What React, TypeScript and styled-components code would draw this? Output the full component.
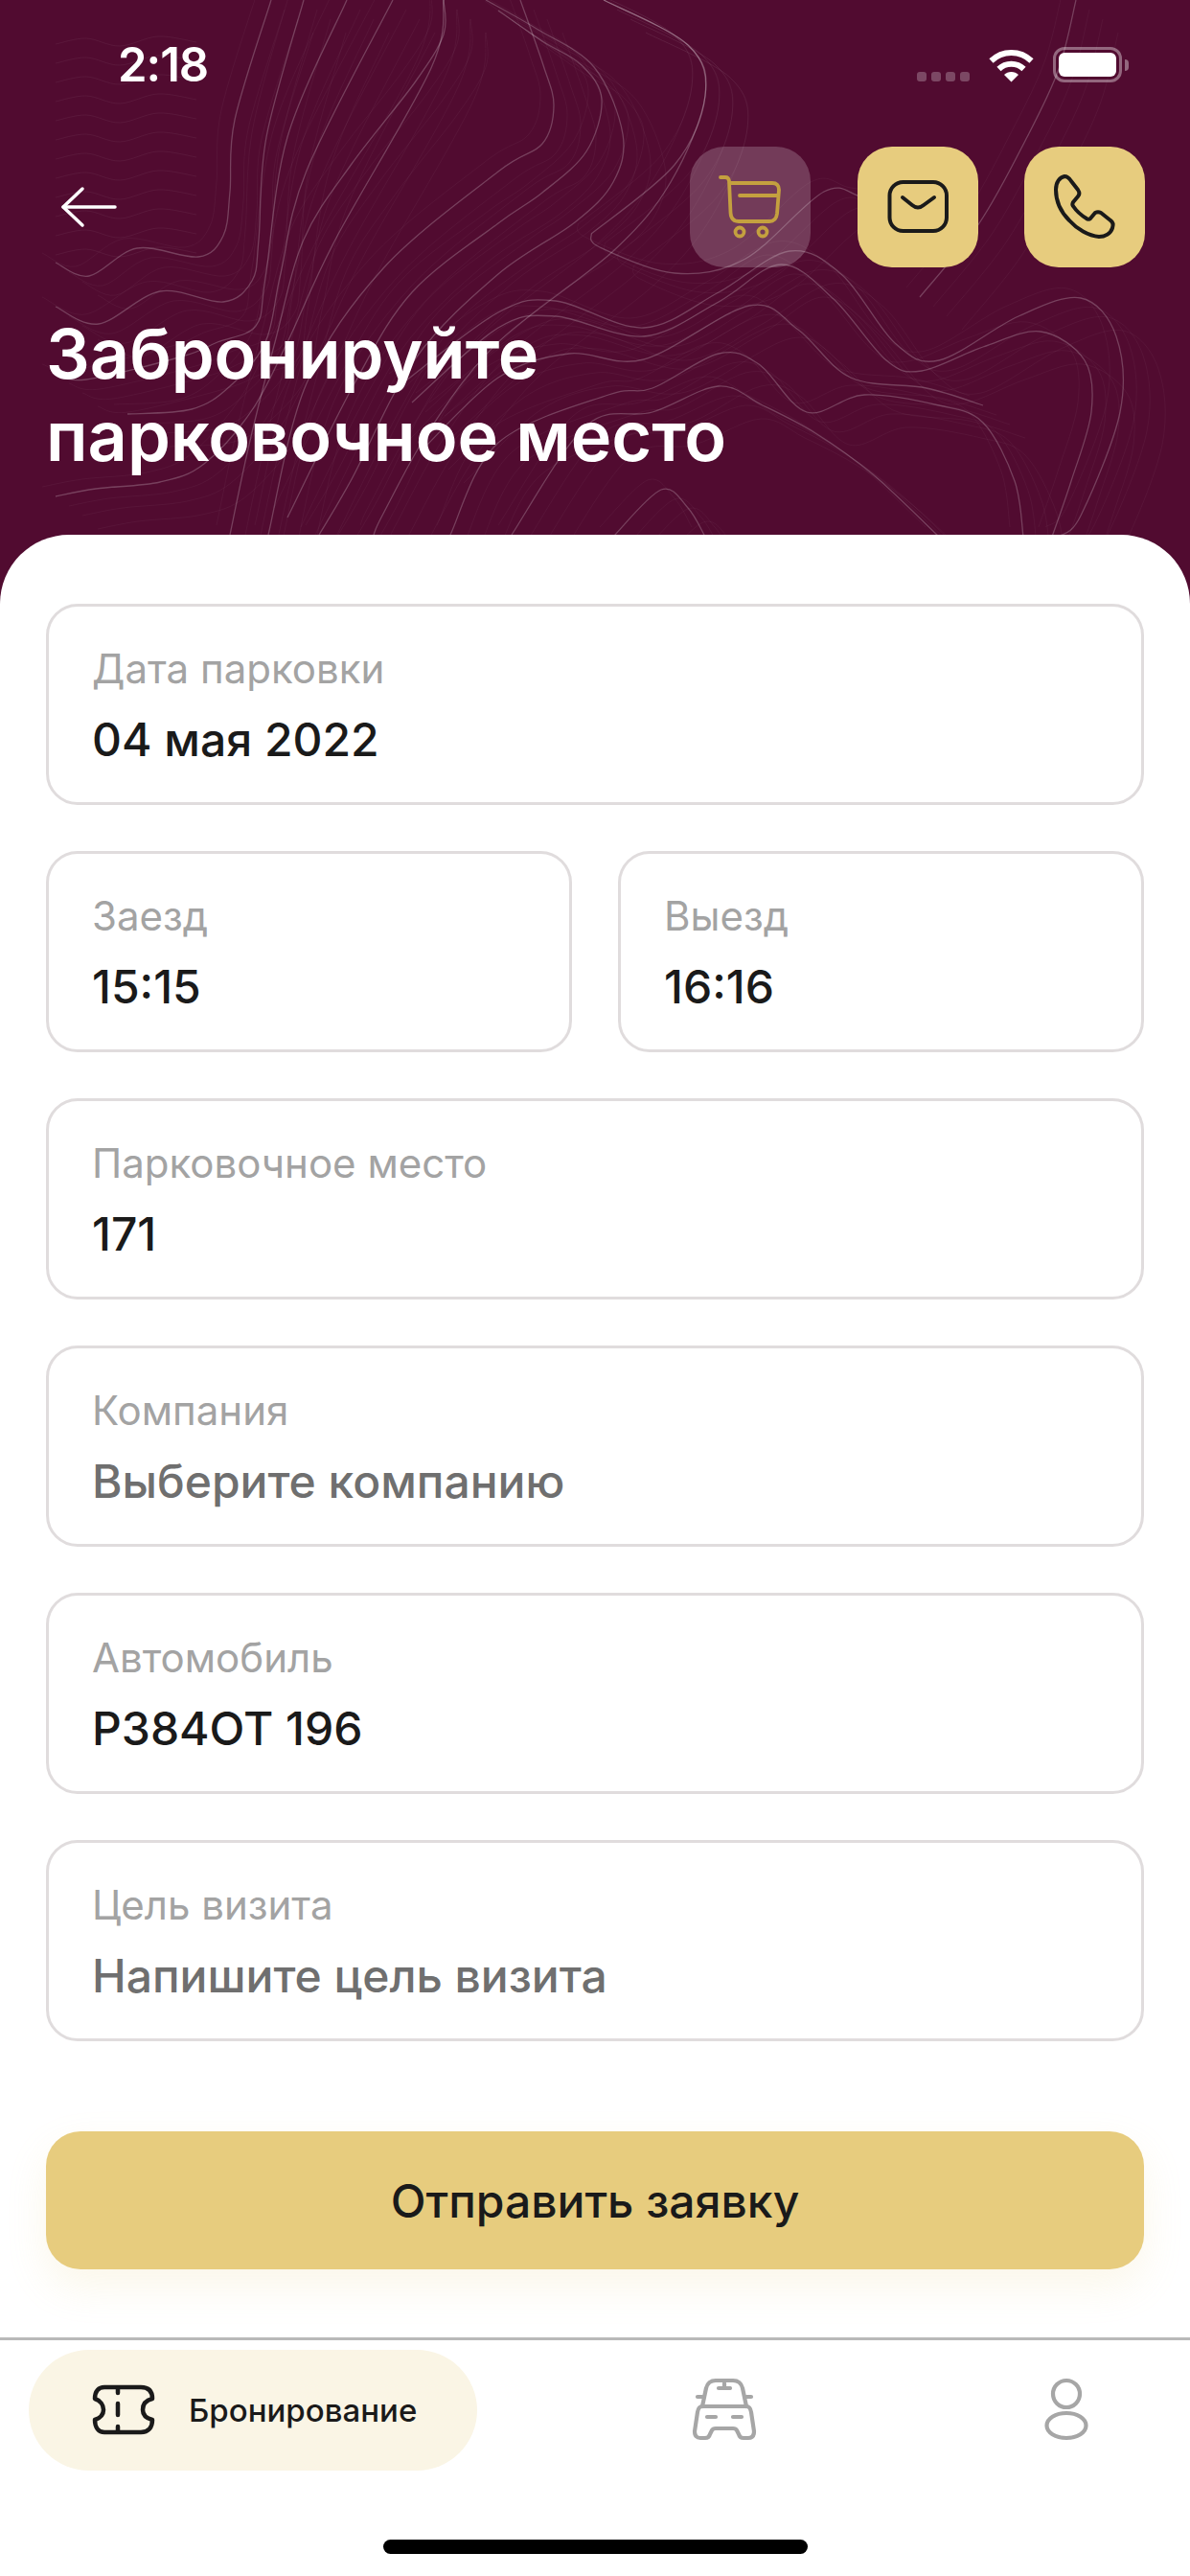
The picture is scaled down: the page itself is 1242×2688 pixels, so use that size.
import React from 'react';
import styled, { createGlobalStyle } from 'styled-components';

const GlobalStyle = createGlobalStyle`
    html, body {
        margin: 0;
        padding: 0;
        background: #ffffff;
    }
    * {
        box-sizing: border-box;
    }
`

const Page = styled.div`
    position: relative;
    isolation: isolate;
    display: flex;
    flex-direction: column;
    width: 1242px;
    height: 2688px;
    overflow: hidden;
    background-color: #510B30;
    font-family: Inter, "Noto Sans", sans-serif;
`

// Topographic lines behind the header
const Topo = styled.svg`
    position: absolute;
    top: 0;
    left: 0;
    z-index: -1;
`

const StatusBar = styled.div`
    display: flex;
    justify-content: space-between;
    align-items: flex-end;
    height: 86px;
    padding: 0 71px 0 123px;
    color: #ffffff;
`

const Time = styled.div`
    font-size: 49px;
    font-weight: 600;
    line-height: 37px;
    letter-spacing: -1px;
`

const StatusIcons = styled.div`
    display: flex;
    align-items: flex-end;
`

const Signal = styled.div`
    display: flex;
    gap: 5px;
    margin-right: 20px;
    padding-bottom: 1px;
`

const SignalDot = styled.span`
    width: 10px;
    height: 10px;
    border-radius: 3px;
    background-color: rgba(255, 255, 255, 0.25);
`

const Battery = styled.div`
    position: relative;
    width: 72px;
    height: 37px;
    margin-left: 20px;
    padding: 3px;
    border: 3px solid rgba(255, 255, 255, 0.38);
    border-radius: 12px;

    &::after {
        content: '';
        position: absolute;
        top: 10px;
        right: -10px;
        width: 4px;
        height: 12px;
        border-radius: 0 4px 4px 0;
        background-color: rgba(255, 255, 255, 0.38);
    }
`

const BatteryFill = styled.div`
    height: 100%;
    border-radius: 6px;
    background-color: #ffffff;
`

const Toolbar = styled.div`
    display: flex;
    align-items: center;
    justify-content: space-between;
    margin-top: 67px;
    padding: 0 47px 0 63px;
`

const Actions = styled.div`
    display: flex;
    gap: 48.5px;
`

const Tile = styled.button<{ $ghost?: boolean }>`
    display: flex;
    align-items: center;
    justify-content: center;
    width: 126px;
    height: 126px;
    padding: 0;
    border: none;
    border-radius: 36px;
    background-color: ${(p) => (p.$ghost ? 'rgba(255, 255, 255, 0.2)' : '#E7CC7E')};
`

const BackButton = styled.button`
    display: flex;
    padding: 0;
    border: none;
    background: transparent;
`

const Title = styled.h1`
    margin: 47px 0 0;
    padding-left: 48px;
    color: #ffffff;
    font-size: 72px;
    font-weight: 600;
    line-height: 86px;
`

const Panel = styled.div`
    flex: 1;
    display: flex;
    flex-direction: column;
    margin-top: 60px;
    border-radius: 72px 72px 0 0;
    background-color: #ffffff;
`

const Form = styled.div`
    display: flex;
    flex-direction: column;
    gap: 48px;
    padding: 72px 48px 0;
`

const Row = styled.div`
    display: grid;
    grid-template-columns: 1fr 1fr;
    gap: 48px;
`

const FieldBox = styled.div`
    height: 210px;
    padding: 40px 45px 0;
    border: 3px solid #E0DCDD;
    border-radius: 33px;
`

const FieldLabel = styled.div`
    color: #A3A3A3;
    font-size: 42px;
    line-height: 50px;
`

const FieldValue = styled.div<{ $muted?: boolean }>`
    margin-top: 20px;
    color: ${(p) => (p.$muted ? '#6F6F6F' : '#1A1A1A')};
    font-size: 48px;
    font-weight: 450;
    line-height: 58px;
`

const Submit = styled.button`
    display: block;
    width: 1146px;
    height: 144px;
    margin: 94px 48px 0;
    padding: 0;
    border: none;
    border-radius: 36px;
    background-color: #E7CC7E;
    box-shadow: 0 18px 42px rgba(231, 204, 126, 0.16);
    color: #1A1A1A;
    font-family: inherit;
    font-size: 48px;
    font-weight: 500;
`

const TabBar = styled.div`
    display: grid;
    grid-template-columns: 468px 516px 198px;
    align-items: center;
    justify-items: center;
    margin-top: 71px;
    padding: 10px 0 0 30px;
    border-top: 3px solid #B9B9B9;
`

const ActiveTab = styled.div`
    display: flex;
    align-items: center;
    gap: 32px;
    width: 468px;
    height: 126px;
    padding-left: 63px;
    border-radius: 63px;
    background-color: #FAF5E5;
    color: #1A1A1A;
    font-size: 33px;
    font-weight: 500;
`

const HomeIndicator = styled.div`
    width: 443px;
    height: 15px;
    margin: 72px auto 0;
    border-radius: 8px;
    background-color: #000000;
`

type Pt = [number, number];

// catmull-rom through the points, good enough for map contours
const smooth = (pts: Pt[]) => {
    let d = `M${pts[0][0]} ${pts[0][1]}`;
    for (let i = 0; i < pts.length - 1; i++) {
        const p0 = pts[Math.max(i - 1, 0)];
        const p1 = pts[i];
        const p2 = pts[i + 1];
        const p3 = pts[Math.min(i + 2, pts.length - 1)];
        const c1x = p1[0] + (p2[0] - p0[0]) / 6;
        const c1y = p1[1] + (p2[1] - p0[1]) / 6;
        const c2x = p2[0] - (p3[0] - p1[0]) / 6;
        const c2y = p2[1] - (p3[1] - p1[1]) / 6;
        d += ` C${c1x} ${c1y} ${c2x} ${c2y} ${p2[0]} ${p2[1]}`;
    }
    return d;
};

const contours: Pt[][] = [
    [[58, 274], [93, 288], [143, 259], [207, 268], [233, 246], [240, 200], [245, 125], [283, 0]],
    [[58, 320], [103, 338], [167, 304], [233, 315], [263, 293], [270, 250], [278, 143], [317, 0]],
    [[58, 390], [90, 396], [190, 372], [227, 357], [267, 340], [277, 290], [300, 143], [362, 0]],
    [[133, 432], [200, 427], [240, 403], [277, 357], [293, 285], [320, 178], [410, 0]],
    [[58, 518], [100, 510], [167, 503], [213, 484], [263, 428], [300, 357], [350, 250], [450, 71], [463, 0]],
    [[240, 558], [260, 464], [287, 357], [317, 250], [367, 171], [433, 86], [463, 36], [463, 0]],
    [[333, 558], [367, 500], [433, 375], [520, 286], [600, 232], [640, 190], [650, 140], [620, 70], [560, 30], [507, 0]],
    [[390, 558], [400, 536], [450, 446], [520, 357], [640, 262], [700, 190], [736, 100], [718, 47], [630, 0]],
    [[280, 558], [320, 400], [400, 280], [520, 179], [566, 150], [578, 110], [567, 68], [543, 0]],
    [[300, 540], [370, 400], [430, 305], [520, 233], [566, 201], [612, 158], [628, 104], [607, 68], [566, 43], [520, 11]],
    [[617, 244], [626, 258], [704, 285], [778, 270], [860, 200], [902, 206], [960, 215]],
    [[617, 244], [704, 172], [736, 100], [718, 47], [630, 0]],
    [[420, 400], [520, 326], [580, 314], [672, 342], [750, 305], [824, 262], [879, 287], [934, 358], [980, 376], [1063, 330], [1128, 311], [1165, 351], [1169, 430], [1128, 538], [1105, 560]],
    [[430, 420], [520, 342], [580, 330], [672, 351], [750, 315], [815, 276], [870, 312], [925, 376], [962, 387], [1026, 362], [1086, 346], [1132, 376], [1139, 430], [1118, 502], [1098, 560]],
    [[440, 470], [520, 394], [594, 369], [672, 375], [782, 319], [833, 344], [888, 394], [967, 405], [1026, 423]],
    [[470, 558], [520, 462], [635, 412], [681, 405], [750, 369], [792, 380], [842, 430], [902, 412], [980, 423], [1026, 441], [1059, 502], [1068, 560]],
    [[534, 558], [612, 444], [681, 430], [750, 403], [796, 423], [851, 452], [911, 495], [980, 560]],
    [[640, 560], [690, 511], [718, 530], [736, 560]],
    [[1123, 0], [1105, 72], [1072, 143], [1022, 233], [960, 310]],
];

// faint lines: shifted copies of the strong ones
const faintShifts: Pt[] = [[14, 10], [28, 20], [-14, -10], [44, 34]];

const leftWaves = Array.from({ length: 12 }, (_, i) => {
    const y = 40 + i * 20;
    const pts: Pt[] = [[58, y + 6], [90, y], [125, y + 8], [165, y - 2], [205, y + 4]];
    return pts;
});

const TopoLines = () => (
    <Topo width="1242" height="560" viewBox="0 0 1242 560" fill="none">
        {contours.map((pts, i) =>
            faintShifts.map(([dx, dy], j) => (
                <path key={`${i}-${j}`} d={smooth(pts)} transform={`translate(${dx} ${dy})`}
                    stroke="#ffffff" strokeOpacity="0.04" strokeWidth="1" />
            ))
        )}
        {leftWaves.map((pts, i) => (
            <path key={i} d={smooth(pts)} stroke="#ffffff" strokeOpacity="0.05" strokeWidth="1" />
        ))}
        {contours.map((pts, i) => (
            <path key={i} d={smooth(pts)} stroke="#ffffff" strokeOpacity="0.22" strokeWidth="1.3" />
        ))}
    </Topo>
);

const WifiIcon = () => (
    <svg width="47" height="36" viewBox="0 0 47 36" fill="none">
        <path d="M2.5 13.5A30 30 0 0 1 44.5 13.5" stroke="#fff" strokeWidth="6" />
        <path d="M10.5 22A18.500 18.500 0 0 1 36.500 22" stroke="#fff" strokeWidth="6" />
        <path d="M23.500 35.500L16 28A10.600 10.600 0 0 1 31 28Z" fill="#fff" />
    </svg>
);

const BackIcon = () => (
    <svg width="60" height="44" viewBox="0 0 60 44" fill="none" stroke="#fff" strokeWidth="3.500" strokeLinecap="round" strokeLinejoin="round">
        <path d="M3 22H57" />
        <path d="M23 3L3 22L23 41" />
    </svg>
);

const CartIcon = () => (
    <svg width="72" height="72" viewBox="0 0 72 72" fill="none" stroke="#C4A03F" strokeWidth="3.800" strokeLinecap="round" strokeLinejoin="round">
        <path d="M5 5H10Q13.500 5 14 9L15.500 42Q16 51 24 51H56Q63 51 64 43L66 18Q66 11 59 11H15" />
        <path d="M25 24H65" />
        <circle cx="25" cy="62" r="4.500" />
        <circle cx="49" cy="62" r="4.500" />
    </svg>
);

const MailIcon = () => (
    <svg width="72" height="72" viewBox="0 0 72 72" fill="none" stroke="#1A1A1A" strokeWidth="4" strokeLinecap="round" strokeLinejoin="round">
        <rect x="6.500" y="10" width="59.500" height="51" rx="14" />
        <path d="M20 26L30 34Q36 39 42 34L53 26" />
    </svg>
);

const PhoneIcon = () => (
    <svg width="72" height="72" viewBox="0 0 72 72" fill="none" stroke="#1A1A1A" strokeWidth="4" strokeLinejoin="round">
        <path d="M6 18C6 10 10 5 15 4C18 4 20 6 22 9L29 18C31 21 31 23 29 25L24 31C23 33 23 34 24 35C28 41 33 45 38 48C39 49 41 49 42 48L47 42C49 41 51 41 53 42L63 50C66 52 66 55 65 58C63 64 57 67 51 67C40 66 28 59 20 50C11 41 6 30 6 18Z" />
    </svg>
);

const TicketIcon = () => (
    <svg width="72" height="60" viewBox="0 0 72 60" fill="none" stroke="#1A1A1A" strokeWidth="4.500" strokeLinecap="round" strokeLinejoin="round">
        <path d="M16 6H54C62 6 66 10 66 18C58 20 56 25 56 29.500C56 34 58 38 66 40C66 48 62 53 54 53H16C10 53 6 48 6 40C12 38 15 34 15 29.500C15 25 12 20 6 18C6 10 10 6 16 6Z" />
        <path d="M30 7V12M30 23V35M30 47V52" />
    </svg>
);

const CarIcon = () => (
    <svg width="72" height="72" viewBox="0 0 72 72" fill="none" stroke="#A6A6A6" strokeWidth="4.200" strokeLinecap="round" strokeLinejoin="round">
        <path d="M13 32L17 13Q19 5 27 5H45Q53 5 55 13L59 32" />
        <path d="M13 32H59Q63 32 64 38L67 58Q67 65 61 65H56Q52 65 51 61L49 57Q48 55 45 55H27Q24 55 23 57L21 61Q20 65 16 65H11Q5 65 5 58L8 38Q9 32 13 32Z" />
        <path d="M30 13H42M36 8V13" />
        <path d="M8 22H13M59 22H64" />
        <path d="M18 43H27M45 43H54" />
    </svg>
);

const UserIcon = () => (
    <svg width="72" height="72" viewBox="0 0 72 72" fill="none" stroke="#A6A6A6" strokeWidth="4.200">
        <circle cx="36" cy="19" r="14" />
        <ellipse cx="36" cy="52" rx="20.500" ry="13" />
    </svg>
);

type FieldProps = {
    label: string;
    value: string;
    muted?: boolean;
};

const Field = ({ label, value, muted }: FieldProps) => (
    <FieldBox>
        <FieldLabel>{label}</FieldLabel>
        <FieldValue $muted={muted}>{value}</FieldValue>
    </FieldBox>
);

const App = () => {
    return (
        <Page>
            <GlobalStyle />
            <TopoLines />
            <StatusBar>
                <Time>2:18</Time>
                <StatusIcons>
                    <Signal>
                        <SignalDot />
                        <SignalDot />
                        <SignalDot />
                        <SignalDot />
                    </Signal>
                    <WifiIcon />
                    <Battery><BatteryFill /></Battery>
                </StatusIcons>
            </StatusBar>
            <Toolbar>
                <BackButton><BackIcon /></BackButton>
                <Actions>
                    <Tile $ghost><CartIcon /></Tile>
                    <Tile><MailIcon /></Tile>
                    <Tile><PhoneIcon /></Tile>
                </Actions>
            </Toolbar>
            <Title>Забронируйте<br />парковочное место</Title>
            <Panel>
                <Form>
                    <Field label="Дата парковки" value="04 мая 2022" />
                    <Row>
                        <Field label="Заезд" value="15:15" />
                        <Field label="Выезд" value="16:16" />
                    </Row>
                    <Field label="Парковочное место" value="171" />
                    <Field label="Компания" value="Выберите компанию" muted />
                    <Field label="Автомобиль" value="Р384ОТ 196" />
                    <Field label="Цель визита" value="Напишите цель визита" muted />
                </Form>
                <Submit>Отправить заявку</Submit>
                <TabBar>
                    <ActiveTab><TicketIcon />Бронирование</ActiveTab>
                    <CarIcon />
                    <UserIcon />
                </TabBar>
                <HomeIndicator />
            </Panel>
        </Page>
    );
};

export default App;
